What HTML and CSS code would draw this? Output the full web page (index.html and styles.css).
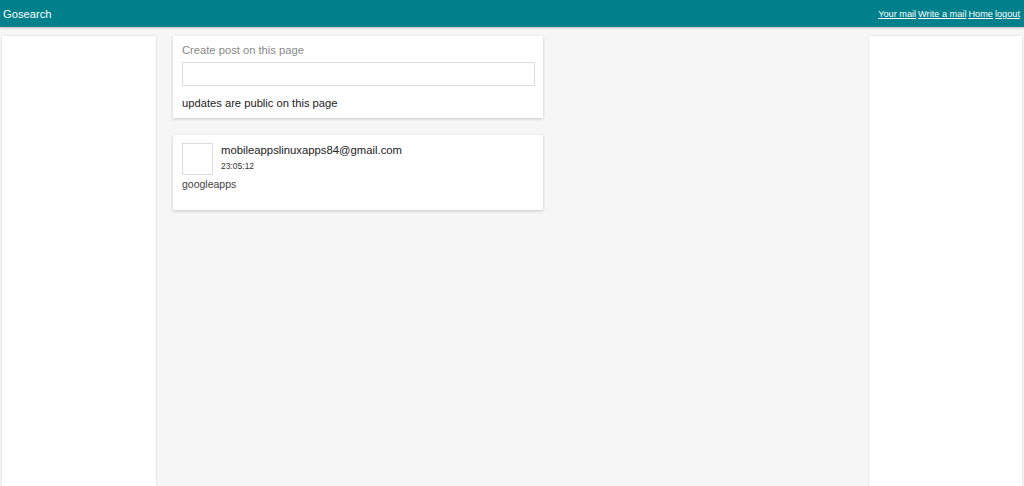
FILE: index.html
```html
<!DOCTYPE html>
<html lang="en">
<head>
    <meta charset="UTF-8">
    <meta name="viewport" content="width=device-width, initial-scale=1.0">
    <title>Gosearch</title>
    <link rel="stylesheet" href="styles.css">
</head>
<body>
    <div class="header">
        <a class="brand">Gosearch</a>
        <div class="nav">
            <a href="#">Your mail</a>
            <a href="#">Write a mail</a>
            <a href="#">Home</a>
            <a href="#">logout</a>
        </div>
    </div>
    <div class="main">
        <div class="side"></div>
        <div class="feed">
            <div class="card post-form">
                <p class="form-title">Create post on this page</p>
                <input class="post-input" type="text">
                <p class="notice">updates are public on this page</p>
            </div>
            <div class="card post">
                <div class="post-head">
                    <div class="avatar"></div>
                    <div>
                        <p class="author">mobileappslinuxapps84@gmail.com</p>
                        <p class="time">23:05:12</p>
                    </div>
                </div>
                <p class="post-body">googleapps</p>
            </div>
        </div>
        <div class="side"></div>
    </div>
</body>
</html>
```

FILE: styles.css
```css
body {
    margin: 0;
    background-color: #f6f6f6;
    font-family: "Liberation Sans", Arial, sans-serif;
    color: #222;
}
p {
    margin: 0;
}
.header {
    height: 27px;
    background-color: #00808a;
    display: flex;
    align-items: center;
    justify-content: space-between;
    padding: 0 4px 0 3px;
    box-shadow: 0 1px 2px rgba(0,0,0,0.25);
}
.brand {
    color: white;
    font-size: 11.2px;
}
.nav {
    display: flex;
    gap: 2px;
}
.nav a {
    color: white;
    font-size: 9.2px;
}
.main {
    display: grid;
    grid-template-columns: 154px 1fr 153px;
    gap: 1px;
    padding: 9px 2px 0;
}
.side {
    background-color: white;
    height: calc(100vh - 36px);
    box-shadow: 0 0 2px rgba(0,0,0,0.15);
}
.feed {
    padding-left: 16px;
}
.card {
    width: 370px;
    box-sizing: border-box;
    background-color: white;
    box-shadow: 0 1px 3px rgba(0,0,0,0.2);
    padding: 0 9px;
}
.post-form {
    height: 82px;
    padding-top: 8px;
}
.form-title {
    color: #888;
    font-size: 11.2px;
}
.post-input {
    display: block;
    width: 353px;
    height: 24px;
    box-sizing: border-box;
    border: 1px solid #ddd;
    margin-top: 6px;
}
.notice {
    font-size: 11.2px;
    margin-top: 11px;
}
.post {
    margin-top: 17px;
    height: 75px;
    padding-top: 8px;
}
.post-head {
    display: flex;
    gap: 8px;
}
.avatar {
    width: 29px;
    height: 30px;
    border: 1px solid #ddd;
}
.author {
    font-size: 11.3px;
    margin-top: 1px;
}
.time {
    font-size: 8.5px;
    margin-top: 5px;
    color: #333;
}
.post-body {
    font-size: 10.5px;
    color: #444;
    margin-top: 3px;
}
```
